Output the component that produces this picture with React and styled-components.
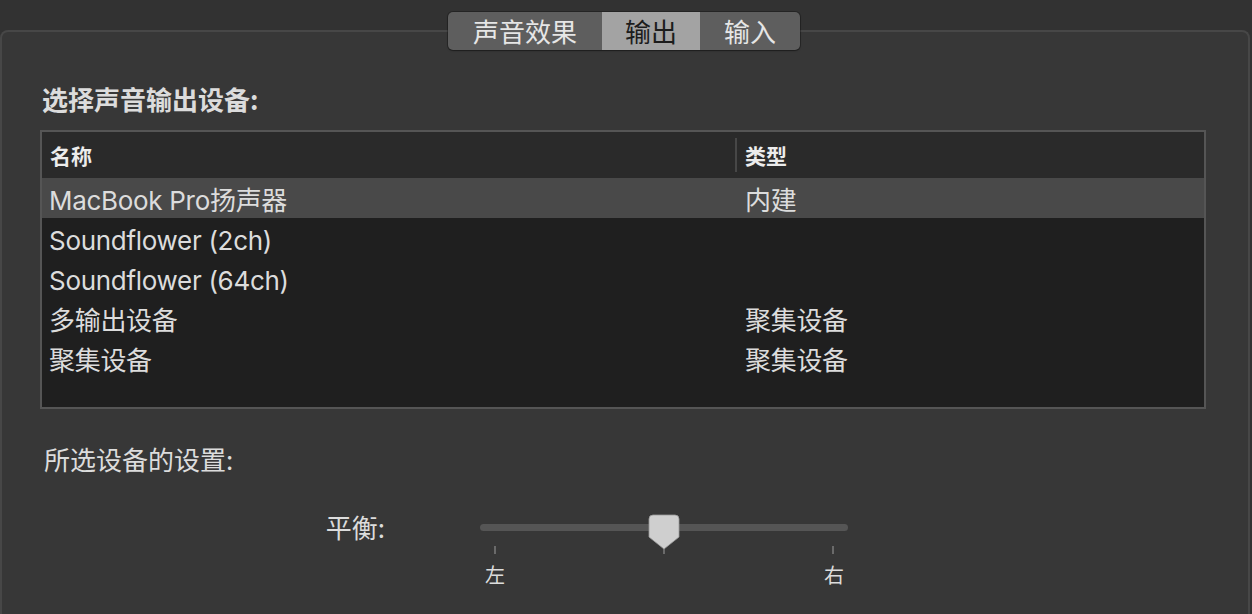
import React from 'react';
import styled, { createGlobalStyle } from 'styled-components';

const GlobalStyle = createGlobalStyle`
  html, body {
    margin: 0;
    padding: 0;
    background: #323232;
  }
  body {
    font-family: "Inter", "Noto Sans CJK SC", sans-serif;
    color: #dcdcdc;
  }
`;

const Page = styled.div`
  height: 614px;
  overflow: hidden;
  display: flex;
  flex-direction: column;
  align-items: center;
  padding-top: 12px;
  box-sizing: border-box;
`;

const Tabs = styled.div`
  position: relative;
  z-index: 1;
  display: flex;
  height: 38px;
  border-radius: 5px;
  overflow: hidden;
  background: #5e5e5e;
  box-shadow: 0 0 0 1px rgba(0, 0, 0, 0.25), 0 1px 2px rgba(0, 0, 0, 0.3);
  margin-right: 4px;
`;

const Tab = styled.div`
  width: ${({ w }) => w}px;
  display: flex;
  align-items: center;
  justify-content: center;
  font-family: "Noto Sans CJK SC", sans-serif;
  font-size: 26px;
  line-height: 38px;
  color: ${({ active }) => (active ? '#1c1c1c' : '#e6e6e6')};
  background: ${({ active }) => (active ? '#a3a3a3' : 'transparent')};
`;

const Panel = styled.div`
  align-self: stretch;
  flex: 1;
  margin-top: -20px;
  margin-right: 2px;
  border: 2px solid #474747;
  border-bottom: none;
  border-radius: 8px 8px 0 0;
  background: #373737;
  padding: 52px 0 0 38px;
  display: flex;
  flex-direction: column;
`;

const Heading = styled.div`
  font-family: "Noto Sans CJK SC", sans-serif;
  font-size: 26px;
  font-weight: ${({ bold }) => (bold ? 700 : 400)};
  line-height: 30px;
  color: #dcdcdc;
  padding-left: ${({ indent }) => indent}px;
`;

const Table = styled.div`
  margin-top: 16px;
  width: 1162px;
  height: 275px;
  border: 2px solid #555555;
  background: #1f1f1f;
  display: flex;
  flex-direction: column;
`;

const HeaderRow = styled.div`
  height: 46px;
  background: #2a2a2a;
  display: grid;
  grid-template-columns: 693px 1fr;
  align-items: center;
`;

const HeaderCell = styled.div`
  font-family: "Noto Sans CJK SC", sans-serif;
  font-size: 21px;
  font-weight: 700;
  color: #ececec;
  padding-left: 8px;
  height: 34px;
  line-height: 34px;
  border-left: ${({ divider }) => (divider ? '2px solid #474747' : 'none')};
`;

const Row = styled.div`
  height: 40px;
  display: grid;
  grid-template-columns: 693px 1fr;
  align-items: center;
  background: ${({ selected }) => (selected ? '#494949' : 'transparent')};
`;

const Cell = styled.div`
  font-size: 26px;
  line-height: 40px;
  letter-spacing: -0.3px;
  color: #dcdcdc;
  padding: 3px 0 0 ${({ second }) => (second ? 10 : 7)}px;
  height: 40px;
  box-sizing: border-box;
  white-space: nowrap;
`;

const Settings = styled.div`
  margin-top: 35px;
`;

const BalanceRow = styled.div`
  margin-top: 38px;
  display: flex;
  align-items: flex-start;
`;

const BalanceLabel = styled.div`
  width: 345px;
  text-align: right;
  font-family: "Noto Sans CJK SC", sans-serif;
  font-size: 26px;
  line-height: 30px;
  color: #dcdcdc;
`;

const Slider = styled.div`
  margin-left: 95px;
  width: 368px;
  padding-top: 12px;
`;

const Track = styled.div`
  position: relative;
  height: 7px;
  border-radius: 4px;
  background: #555555;
`;

const Knob = styled.svg`
  position: absolute;
  left: 168px;
  top: -10px;
`;

const Ticks = styled.div`
  display: flex;
  justify-content: space-between;
  padding: 15px 14px 0;
`;

const Tick = styled.div`
  width: 2px;
  height: 8px;
  background: #6a6a6a;
`;

const TickLabels = styled.div`
  display: flex;
  justify-content: space-between;
  padding: 9px 4px 0 5px;
  font-family: "Noto Sans CJK SC", sans-serif;
  font-size: 20px;
  line-height: 24px;
  color: #dcdcdc;
`;

const devices = [
  { name: 'MacBook Pro扬声器', type: '内建', selected: true },
  { name: 'Soundflower (2ch)', type: '' },
  { name: 'Soundflower (64ch)', type: '' },
  { name: '多输出设备', type: '聚集设备' },
  { name: '聚集设备', type: '聚集设备' },
];

export default function App() {
  return (
    <>
      <GlobalStyle />
      <Page>
        <Tabs>
          <Tab w={154}>声音效果</Tab>
          <Tab w={98} active>输出</Tab>
          <Tab w={100}>输入</Tab>
        </Tabs>
        <Panel>
          <Heading bold indent={2}>选择声音输出设备:</Heading>
          <Table>
            <HeaderRow>
              <HeaderCell>名称</HeaderCell>
              <HeaderCell divider>类型</HeaderCell>
            </HeaderRow>
            {devices.map((d) => (
              <Row key={d.name} selected={d.selected}>
                <Cell>{d.name}</Cell>
                <Cell second>{d.type}</Cell>
              </Row>
            ))}
          </Table>
          <Settings>
            <Heading indent={4}>所选设备的设置:</Heading>
          </Settings>
          <BalanceRow>
            <BalanceLabel>平衡:</BalanceLabel>
            <Slider>
              <Track>
                <Knob width="32" height="36" viewBox="0 0 32 36">
                  <path
                    d="M5 1 H27 Q31 1 31 5 V23 L16 35 L1 23 V5 Q1 1 5 1 Z"
                    fill="#cfcfcf"
                    stroke="#9a9a9a"
                    strokeWidth="0.8"
                  />
                </Knob>
              </Track>
              <Ticks>
                <Tick />
                <Tick />
                <Tick />
              </Ticks>
              <TickLabels>
                <span>左</span>
                <span>右</span>
              </TickLabels>
            </Slider>
          </BalanceRow>
        </Panel>
      </Page>
    </>
  );
}
